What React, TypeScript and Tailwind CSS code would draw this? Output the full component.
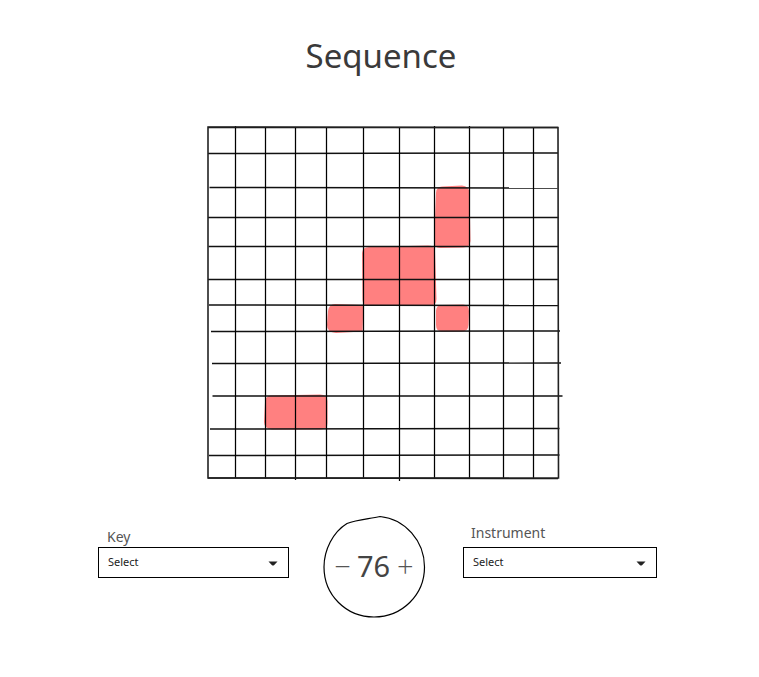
const rows = [
  [208, 127.5, 558, 127.5],
  [208, 153.5, 558, 153],
  [209.5, 187.5, 557.5, 188],
  [208, 217.5, 558.5, 217.5],
  [208.5, 246.5, 558.5, 246.5],
  [208, 279.5, 558.5, 279.5],
  [209, 305, 558.5, 305.5],
  [211, 331.5, 560, 331],
  [212, 363.5, 561, 363],
  [212.5, 396, 562.5, 396],
  [210, 429, 559.5, 428.5],
  [209, 455.5, 559.5, 455],
  [208, 478, 558, 478.5],
];

const cols = [
  [235.5, 126, 235.5, 478],
  [265.5, 127, 265.5, 478.5],
  [295.5, 127, 295.5, 480],
  [326.5, 127, 326.5, 478.5],
  [363.5, 127, 363.5, 478.5],
  [399.5, 127, 399.5, 481],
  [434.5, 126, 434.5, 478.5],
  [469.5, 126, 469.5, 478.5],
  [503.5, 127, 503.5, 478.5],
  [533.5, 127, 533.5, 479],
];

const cells = [
  "M442 186.5 L462 185.5 Q469 186 469.5 193 L470.5 241 Q470 247.5 463 247.5 L440 248 Q433.5 247.5 434 242 L436 193 Q436 187 442 186.5Z",
  "M369 247 L428 245.5 Q435 245.5 435 251 L436.5 299 Q436.5 305.5 430 305.5 L369 305.5 Q362.5 305.5 362.5 300 L362 253 Q362.5 247 369 247Z",
  "M335 304 L363.5 305 L362.5 331.5 L336 333 Q327 332.5 327 325 L328 311 Q329 304 335 304Z",
  "M442 305 L463 304.5 Q469 304.5 469 311 L468.5 325 Q468 331.5 462 331.5 L442 331.5 Q436 331.5 436 325 L436 311 Q436 305 442 305Z",
  "M271 395.5 L320 394.5 Q327.5 394.5 327.5 401 L327.5 423 Q327.5 429.5 321 429.5 L272 429.5 Q264 428.5 264 422 L265 402 Q265 396 271 395.5Z",
];

function SketchGrid() {
  return (
    <svg
      width="370"
      height="370"
      viewBox="200 120 370 370"
      fill="none"
      className="block ml-[200px] mt-[41px]"
    >
      {cells.map((d) => (
        <path key={d} d={d} fill="#ff8080" />
      ))}
      {rows.map(([x1, y1, x2, y2]) => (
        <line key={y1} x1={x1} y1={y1} x2={x2} y2={y2} stroke="#111" strokeWidth="1.4" />
      ))}
      {cols.map(([x1, y1, x2, y2]) => (
        <line key={x1} x1={x1} y1={y1} x2={x2} y2={y2} stroke="#000" strokeWidth="1.25" />
      ))}
      <path d="M208 127 L558 127.5 L558.5 478 L208 478 Z" stroke="#222" strokeWidth="1.6" />
    </svg>
  );
}

function SelectBox({ label, labelClass, widthClass }: { label: string; labelClass: string; widthClass: string }) {
  return (
    <div className={widthClass}>
      <div className={`text-[14px] leading-[20px] text-[#555] ${labelClass}`}>{label}</div>
      <div className="h-[31px] border border-black bg-white flex items-center justify-between pl-[9px] pr-[10px]">
        <span className="text-[11px] leading-none text-[#222] -mt-[2px]">Select</span>
        <svg width="10" height="5" viewBox="0 0 10 5" className="mt-[2px]">
          <path d="M0.5 0.5 L9.5 0.5 L6 4.2 Q5 5 4 4.2 Z" fill="#222" />
        </svg>
      </div>
    </div>
  );
}

function Tempo() {
  return (
    <div className="relative w-[104px] h-[104px] flex items-center justify-center text-[#444] shrink-0">
      <svg width="104" height="104" viewBox="322 514 104 104" fill="none" className="absolute inset-0">
        <path
          d="M347 522.5 C357 518.5 368 518 380 515.5 C405 518 424.5 540 424.5 566 C424.5 594 402 616 374 616 C346 616 324 594 324 566 C324 549 333 531 347 522.5Z"
          stroke="#000"
          strokeWidth="1.2"
        />
      </svg>
      <div className="relative flex items-center -mt-[3px]">
        <span className="text-[29px] leading-none font-['Open_Sans'] font-light text-[#555] mr-[6px]">−</span>
        <span className="text-[29px] leading-none">76</span>
        <span className="text-[29px] leading-none font-['Open_Sans'] font-light text-[#555] ml-[7px]">+</span>
      </div>
    </div>
  );
}

export default function App() {
  return (
    <div className="w-[759px] h-[677px] bg-white font-['Noto_Sans','Open_Sans',sans-serif]">
      <h1 className="pt-[33px] pl-[3px] text-center text-[33px] leading-[46px] text-[#3a3a3a]">Sequence</h1>
      <SketchGrid />
      <div className="flex items-start pl-[98px] mt-[25px]">
        <div className="pt-[12px]">
          <SelectBox label="Key" labelClass="pl-[9px]" widthClass="w-[191px]" />
        </div>
        <div className="ml-[33px]">
          <Tempo />
        </div>
        <div className="ml-[37px] pt-[12px]">
          <SelectBox label="Instrument" labelClass="pl-[8px] -mt-[4px] mb-[4px]" widthClass="w-[194px]" />
        </div>
      </div>
    </div>
  );
}
